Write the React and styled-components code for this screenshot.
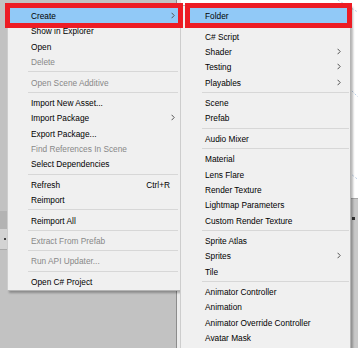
import styled, { createGlobalStyle } from "styled-components";

const Global = createGlobalStyle`
  html, body { margin: 0; padding: 0; background: #ffffff; }
  body { font-family: "Liberation Sans", Arial, sans-serif; }
`;

const ROW = 15.33;
const GAP = 5.12;

const assetItems = [
  { label: "Create", sub: true, active: true },
  { label: "Show in Explorer" },
  { label: "Open" },
  { label: "Delete", disabled: true },
  "sep",
  { label: "Open Scene Additive", disabled: true },
  "sep",
  { label: "Import New Asset..." },
  { label: "Import Package", sub: true },
  { label: "Export Package..." },
  { label: "Find References In Scene", disabled: true },
  { label: "Select Dependencies" },
  "sep",
  { label: "Refresh", shortcut: "Ctrl+R" },
  { label: "Reimport" },
  "sep",
  { label: "Reimport All" },
  "sep",
  { label: "Extract From Prefab", disabled: true },
  "sep",
  { label: "Run API Updater...", disabled: true },
  "sep",
  { label: "Open C# Project" },
];

const createItems = [
  { label: "Folder", active: true },
  "sep",
  { label: "C# Script" },
  { label: "Shader", sub: true },
  { label: "Testing", sub: true },
  { label: "Playables", sub: true },
  "sep",
  { label: "Scene" },
  { label: "Prefab" },
  "sep",
  { label: "Audio Mixer" },
  "sep",
  { label: "Material" },
  { label: "Lens Flare" },
  { label: "Render Texture" },
  { label: "Lightmap Parameters" },
  { label: "Custom Render Texture" },
  "sep",
  { label: "Sprite Atlas" },
  { label: "Sprites", sub: true },
  { label: "Tile" },
  "sep",
  { label: "Animator Controller" },
  { label: "Animation" },
  { label: "Animator Override Controller" },
  { label: "Avatar Mask" },
];

const Chevron = () => (
  <svg width="4" height="7" viewBox="0 0 4 7">
    <path d="M0.6 0.8 L3.2 3.5 L0.6 6.2" fill="none" stroke="#555" strokeWidth="1" />
  </svg>
);

const Menu = ({ items, x, y, w, inset, gutter, sepL, sepR, padR, extra }) => (
  <Popup $x={x} $y={y} $w={w} $extra={extra}>
    {items.map((it, i) =>
      it === "sep" ? (
        <Separator key={i} $l={sepL} $r={sepR} />
      ) : (
        <Item
          key={i}
          $inset={inset}
          $gutter={gutter}
          $padR={padR}
          $active={it.active}
          $disabled={it.disabled}
        >
          <Label>{it.label}</Label>
          {it.shortcut && <Shortcut>{it.shortcut}</Shortcut>}
          {it.sub && <Chevron />}
        </Item>
      )
    )}
  </Popup>
);

export default function App() {
  return (
    <Stage>
      <Global />
      <Backdrop>
        <ProjectPane>
          <PaneTab />
          <PaneRow>
            <Dot />
          </PaneRow>
        </ProjectPane>
        <PaneDivider />
        <EdgeStrip />
        <ScenePane>
          <SceneView>
            <svg width="100%" height="100%" viewBox="0 0 177 198" preserveAspectRatio="none">
              <g stroke="#b9cde4" strokeWidth="1" strokeDasharray="2 2" fill="none">
                <path d="M150 -4 L190 20" />
                <path d="M120 40 L190 110" />
                <path d="M140 150 L190 190" />
              </g>
            </svg>
          </SceneView>
          <SceneFloor>
            <FloorMark />
          </SceneFloor>
        </ScenePane>
      </Backdrop>

      <Menu items={assetItems} x={7} y={5} w={174} inset={2} gutter={21} sepL={20} sepR={2} padR={3} extra={1} />
      <Menu items={createItems} x={180} y={5} w={171} inset={9} gutter={15} sepL={21} sepR={1} padR={6} extra={30} />
    </Stage>
  );
}

const Stage = styled.div`
  position: relative;
  width: 358px;
  height: 348px;
  overflow: hidden;
  font-family: "Liberation Sans", Arial, sans-serif;
`;

const Backdrop = styled.div`
  display: flex;
  width: 100%;
  height: 100%;
`;

const ProjectPane = styled.div`
  width: 176px;
  background: #c2c2c2;
  display: flex;
  flex-direction: column;
`;

const PaneTab = styled.div`
  margin-top: 211px;
  height: 18px;
  background: #b3b3b3;
`;

const PaneRow = styled.div`
  height: 20px;
  background: #d3d3d3;
  border-bottom: 1px solid #aaaaaa;
  display: flex;
  align-items: center;
  padding-left: 4px;
`;

const Dot = styled.span`
  width: 2px;
  height: 2px;
  background: #444;
`;

const PaneDivider = styled.div`
  width: 1px;
  background: #8c8c8c;
`;

const EdgeStrip = styled.div`
  width: 4px;
  background: #ececec;
`;

const ScenePane = styled.div`
  flex: 1;
  display: flex;
  flex-direction: column;
`;

const SceneView = styled.div`
  height: 198px;
  background: #ffffff;
`;

const SceneFloor = styled.div`
  flex: 1;
  background: #c8c8c8;
  border-top: 1px solid #a6a6a6;
  display: flex;
  justify-content: flex-end;
  padding-top: 18px;
`;

const FloorMark = styled.span`
  width: 3px;
  height: 3px;
  margin-right: 3px;
  background: #333;
`;

const Popup = styled.div`
  position: absolute;
  left: ${(p) => p.$x}px;
  top: ${(p) => p.$y}px;
  width: ${(p) => p.$w}px;
  box-sizing: border-box;
  background: #f0f0f0;
  border: 1px solid #b4b4b4;
  border-left-color: #cdcdcd;
  box-shadow: 2px 2px 2px rgba(0, 0, 0, 0.28);
  padding: 2px 0 ${(p) => p.$extra}px;
  display: flex;
  flex-direction: column;
`;

const Item = styled.div`
  position: relative;
  height: ${ROW}px;
  margin: 0 ${(p) => (p.$inset === 2 ? 2 : 3)}px 0 ${(p) => p.$inset}px;
  padding: 0 ${(p) => p.$padR}px 0 ${(p) => p.$gutter}px;
  display: flex;
  align-items: center;
  font-size: 8.3px;
  color: ${(p) => (p.$disabled ? "#888888" : "#000000")};
  background: ${(p) => (p.$active ? "#91c9f7" : "transparent")};
  outline: ${(p) => (p.$active ? "5px solid #ed1c24" : "none")};
  z-index: ${(p) => (p.$active ? 5 : "auto")};
  white-space: nowrap;
`;

const Label = styled.span`
  flex: 1;
  padding-top: 1px;
`;

const Shortcut = styled.span`
  margin-right: 5px;
  padding-top: 1px;
`;

const Separator = styled.div`
  height: ${GAP}px;
  margin: 0 ${(p) => p.$r}px 0 ${(p) => p.$l}px;
  display: flex;
  align-items: center;
  &::after {
    content: "";
    flex: 1;
    height: 1px;
    background: #d7d7d7;
  }
`;
